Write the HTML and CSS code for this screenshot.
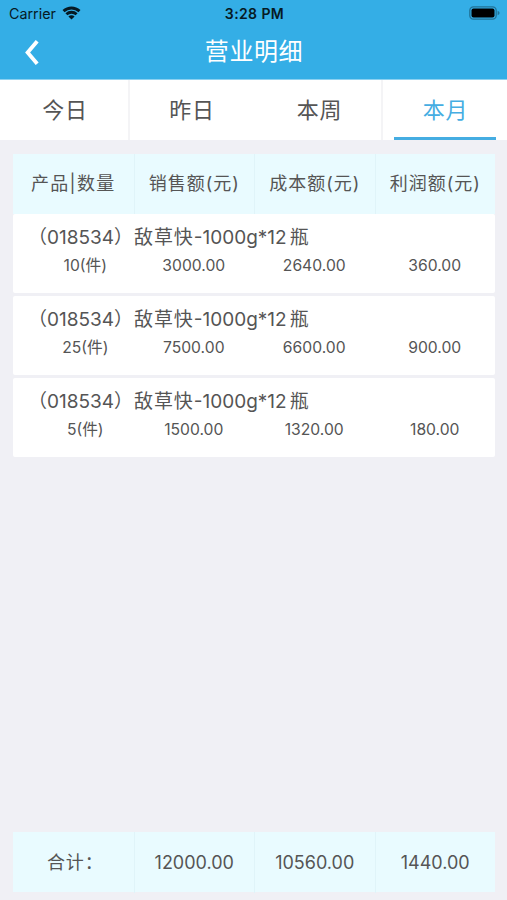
FILE: index.html
```html
<!DOCTYPE html>
<html lang="zh-CN">
<head>
    <meta charset="UTF-8">
    <meta name="viewport" content="width=device-width, initial-scale=1.0">
    <title>营业明细</title>
    <link rel="stylesheet" href="styles.css">
</head>
<body>
    <header class="header">
        <div class="status-bar">
            <div class="carrier">
                <span>Carrier</span>
                <svg class="wifi" width="19" height="14" viewBox="0 0 18 14" fill="none" stroke="#061a24" stroke-width="2.9">
                    <path d="M1 5.1C5.6 .9 12.4 .9 17 5.1"/>
                    <path d="M3.9 8.3C6.8 5.6 11.2 5.6 14.1 8.3"/>
                    <path d="M9 13.4 5.9 10.4C7.7 8.9 10.3 8.9 12.1 10.4Z" fill="#061a24" stroke="none"/>
                </svg>
            </div>
            <span class="time">3:28 PM</span>
            <svg class="battery" width="31" height="14" viewBox="0 0 31 14">
                <rect x=".8" y=".8" width="26.4" height="12.4" rx="3.6" fill="none" stroke="#217397" stroke-width="1.3"/>
                <rect x="2.5" y="2.5" width="23" height="9" rx="2" fill="#000"/>
                <path d="M28.6 4.8q2 .8 2 2.2t-2 2.2z" fill="#217397"/>
            </svg>
        </div>
        <div class="nav-bar">
            <svg class="back" width="14" height="25" viewBox="0 0 14 25" fill="none" stroke="#fff" stroke-width="3.8">
                <path d="M12.2 1.2 2.6 12.5 12.2 23.8"/>
            </svg>
            <h1>营业明细</h1>
        </div>
    </header>

    <nav class="tabs">
        <a class="tab line">今日</a>
        <a class="tab">昨日</a>
        <a class="tab line">本周</a>
        <a class="tab active">本月</a>
    </nav>

    <main class="content">
        <div class="grid table-head">
            <span>产品|数量</span>
            <span>销售额(元)</span>
            <span>成本额(元)</span>
            <span>利润额(元)</span>
        </div>

        <section class="card">
            <h2><b>（018534）</b><i>敌草快</i>-1000g*12<em>瓶</em></h2>
            <div class="grid values">
                <span>10(件)</span>
                <span>3000.00</span>
                <span>2640.00</span>
                <span>360.00</span>
            </div>
        </section>

        <section class="card">
            <h2><b>（018534）</b><i>敌草快</i>-1000g*12<em>瓶</em></h2>
            <div class="grid values">
                <span>25(件)</span>
                <span>7500.00</span>
                <span>6600.00</span>
                <span>900.00</span>
            </div>
        </section>

        <section class="card">
            <h2><b>（018534）</b><i>敌草快</i>-1000g*12<em>瓶</em></h2>
            <div class="grid values">
                <span>5(件)</span>
                <span>1500.00</span>
                <span>1320.00</span>
                <span>180.00</span>
            </div>
        </section>
    </main>

    <footer class="grid total">
        <span class="label">合计：</span>
        <span>12000.00</span>
        <span>10560.00</span>
        <span>1440.00</span>
    </footer>
</body>
</html>
```
FILE: styles.css
```css
* {
    box-sizing: border-box;
}

body {
    display: flex;
    flex-direction: column;
    height: 900px;
    margin: 0;
    background-color: #f0f0f5;
    color: #555;
    font-family: Inter, "Noto Sans CJK SC", sans-serif;
    overflow: hidden;
}

h1, h2 {
    margin: 0;
    font-weight: 400;
}

i, em {
    font-style: normal;
}

/* header */
.header {
    flex: none;
    height: 80px;
    background-color: #34aee6;
    border-bottom: 1px solid #8bd1f1;
}

.status-bar {
    display: grid;
    grid-template-columns: 1fr auto 1fr;
    align-items: center;
    height: 27px;
    padding: 0 7px 0 9px;
    color: #061a24;
    font-size: 14.3px;
}

.carrier {
    display: flex;
    align-items: center;
    gap: 6px;
}

.wifi {
    margin-top: -2px;
}

.time {
    font-size: 14px;
    font-weight: 600;
    letter-spacing: 0.4px;
}

.battery {
    justify-self: end;
    margin-top: -1px;
}

.nav-bar {
    display: grid;
    grid-template-columns: 60px 1fr 60px;
    align-items: center;
    height: 50px;
    color: #fff;
}

.back {
    margin-left: 25px;
}

.nav-bar h1 {
    padding-left: 1px;
    font-size: 24px;
    line-height: 50px;
    letter-spacing: 0.6px;
    text-align: center;
}

/* tabs */
.tabs {
    display: grid;
    grid-template-columns: 130px 126px 127px 124px;
    flex: none;
    height: 60px;
    background-color: #fff;
}

.tab {
    display: flex;
    justify-content: center;
    padding-right: 2px;
    font-size: 22px;
    line-height: 60px;
    letter-spacing: 0.8px;
}

.tab.line {
    padding: 0 0 0 2px;
    border-right: 2px solid #f4f4f6;
}

.tab.active {
    padding: 0 0 0 1px;
    color: #45ade2;
    background: linear-gradient(#45ade2, #45ade2) 11px 57px / 102px 3px no-repeat;
}

/* table */
.content {
    flex: 1;
    padding: 13.5px 12px 0 13px;
}

.grid {
    display: grid;
    grid-template-columns: repeat(4, 1fr);
    text-align: center;
}

.table-head,
.total {
    height: 60px;
    background-color: #e9fbff;
    line-height: 61px;
    font-size: 18px;
}

.table-head {
    line-height: 60px;
    letter-spacing: 1px;
}

.table-head span:first-child {
    letter-spacing: 1.3px;
}

.table-head span + span,
.total span + span {
    border-left: 1px solid #e0f4f9;
}

.card {
    height: 79.5px;
    margin-bottom: 2.5px;
    padding-top: 9.5px;
    background-color: #fff;
    border-radius: 2px;
}

.card h2 {
    padding-left: 15px;
    font-size: 19px;
    line-height: 30px;
    white-space: nowrap;
}

.card b {
    margin-right: 1px;
    font-weight: 400;
}

.card i {
    letter-spacing: 0.9px;
}

.card em {
    margin-left: 3px;
}

.values {
    font-size: 15.7px;
    line-height: 26px;
}

.values span:first-child {
    padding-left: 24px;
}

.total {
    flex: none;
    margin: 0 12px 8px 13px;
}

.total .label {
    padding-left: 4px;
    letter-spacing: 0.8px;
}
```
